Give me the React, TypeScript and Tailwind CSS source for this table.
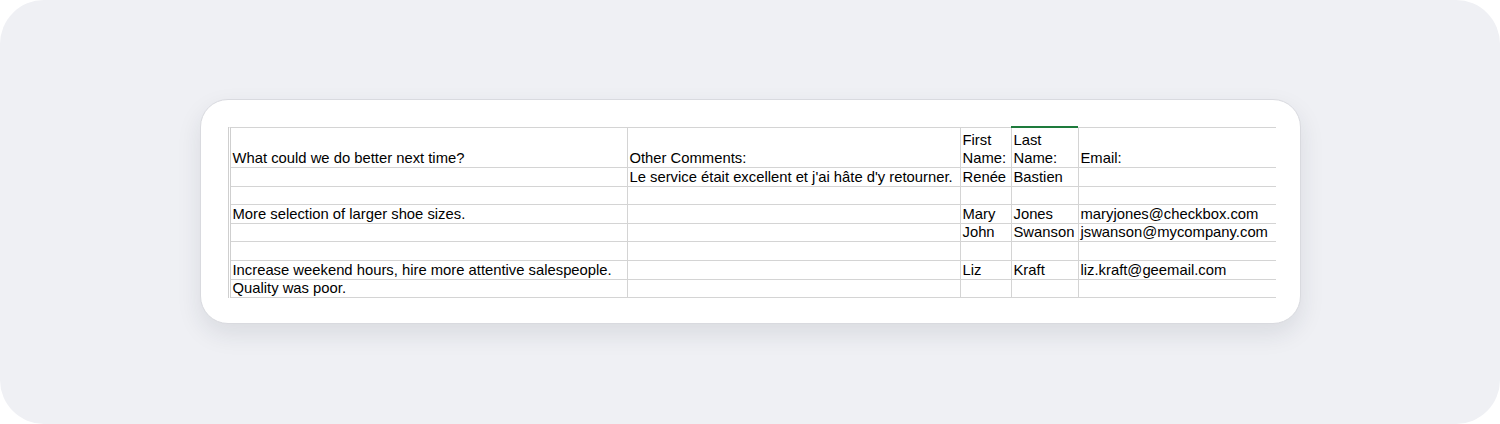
const rows: { h: string; cells: string[] }[] = [
  { h: "h-[19px]", cells: ["", "Le service était excellent et j'ai hâte d'y retourner.", "Renée", "Bastien", ""] },
  { h: "h-[18px]", cells: ["", "", "", "", ""] },
  { h: "h-[19px]", cells: ["More selection of larger shoe sizes.", "", "Mary", "Jones", "maryjones@checkbox.com"] },
  { h: "h-[18px]", cells: ["", "", "John", "Swanson", "jswanson@mycompany.com"] },
  { h: "h-[19px]", cells: ["", "", "", "", ""] },
  { h: "h-[19px]", cells: ["Increase weekend hours, hire more attentive salespeople.", "", "Liz", "Kraft", "liz.kraft@geemail.com"] },
  { h: "h-[18px]", cells: ["Quality was poor.", "", "", "", ""] },
];

const cols = "grid grid-cols-[397px_333px_51px_67px_198px]";

function Cell({ children, last, className = "" }: { children?: React.ReactNode; last?: boolean; className?: string }) {
  return (
    <div
      className={`flex items-end pl-[2px] whitespace-nowrap overflow-hidden ${last ? "" : "border-r border-[#d4d4d4]"} ${className}`}
    >
      {children}
    </div>
  );
}

export default function App() {
  return (
    <div className="w-[1500px] h-[424px] bg-white">
      <div className="w-full h-full rounded-[44px] bg-[#eff0f4] flex justify-center pt-[99px]">
        <div className="w-[1101px] h-[225px] bg-white rounded-[28px] border border-[#d9dadf] shadow-[0_10px_24px_rgba(30,35,60,0.10)] pl-[27px] pt-[27px] pr-[24px] pb-[25px]">
          <div
            className="w-[1048px] border-t border-[#d4d4d4] border-l-[3px] border-l-[#cfcfcf] border-double text-[14.8px] leading-[18px] text-black"
            style={{ fontFamily: '"Liberation Sans", Arial, Helvetica, sans-serif' }}
          >
            <div className={`${cols} h-[40px] border-b border-[#d4d4d4]`}>
              <Cell>What could we do better next time?</Cell>
              <Cell>Other Comments:</Cell>
              <Cell className="whitespace-normal">
                First
                <br />
                Name:
              </Cell>
              <Cell className="whitespace-normal relative overflow-visible">
                <span className="absolute -top-[2px] -left-px right-0 h-[2px] bg-[#1e7b3c]" />
                Last
                <br />
                Name:
              </Cell>
              <Cell last>Email:</Cell>
            </div>
            {rows.map((r, i) => (
              <div key={i} className={`${cols} ${r.h} border-b border-[#d4d4d4]`}>
                {r.cells.map((c, j) => (
                  <Cell key={j} last={j === 4}>
                    {c}
                  </Cell>
                ))}
              </div>
            ))}
          </div>
        </div>
      </div>
    </div>
  );
}
